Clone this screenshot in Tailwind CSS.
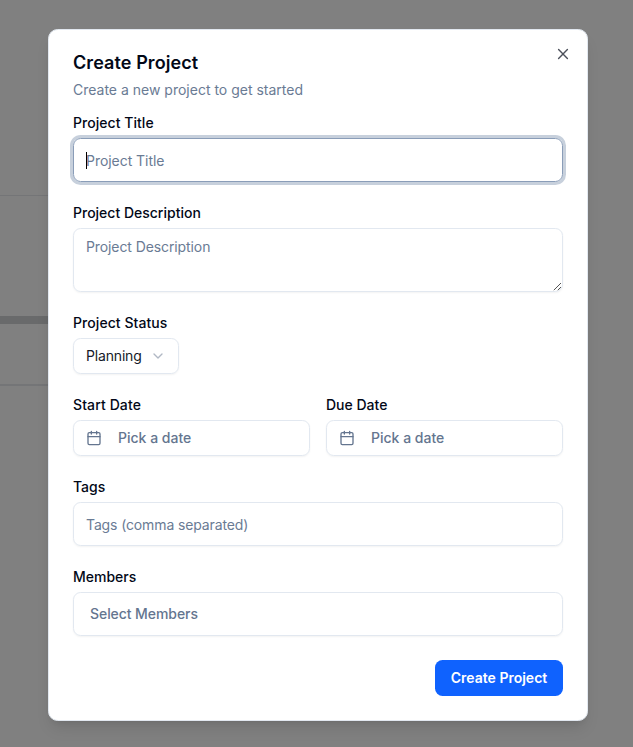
<!DOCTYPE html>
<html lang="en">
<head>
<meta charset="utf-8">
<title>Create Project</title>
<script src="https://cdn.jsdelivr.net/npm/@tailwindcss/browser@4"></script>
</head>
<body class="relative h-[747px] overflow-hidden bg-[#808080] font-['Inter',sans-serif] text-sm text-[#020817] antialiased">
  <div class="absolute top-0 left-0 w-16" aria-hidden="true">
    <div class="mt-[195px] h-px bg-[#747577]"></div>
    <div class="mt-[120px] h-2 bg-[#696a6b]"></div>
    <div class="mt-[60px] h-0.5 bg-[#747577]"></div>
  </div>

  <main role="dialog" class="relative mt-[29px] ml-12 flex h-[692px] w-[540px] flex-col rounded-[9.6px] border border-[#e2e8f0] bg-white p-6 shadow-lg">
    <button aria-label="Close" class="absolute top-4 right-4 opacity-70">
      <svg class="size-4" viewBox="0 0 16 16" fill="none" stroke="currentColor" stroke-width="1.4" stroke-linecap="round"><path d="m3.6 3.6 8.8 8.8M12.4 3.6l-8.8 8.8"/></svg>
    </button>

    <h1 class="text-lg leading-[18px] font-semibold tracking-[0.005em]">Create Project</h1>
    <p class="mt-2 leading-5 text-[#6a7b94]">Create a new project to get started</p>

    <form class="mt-4 flex flex-col gap-6">
      <div class="flex flex-col gap-2">
        <label class="leading-[14px] font-medium tracking-[0.003em]">Project Title</label>
        <div class="relative flex h-11 items-center rounded-[7.6px] border border-[#8a9db8] px-3 pt-px tracking-[-0.003em] text-[#6a7b94] ring-3 ring-[#c7d0dc]">
          <span class="absolute top-[13px] left-3 h-[17px] w-px bg-black"></span>
          <span>Project Title</span>
        </div>
      </div>

      <div class="flex flex-col gap-2">
        <label class="leading-[14px] font-medium">Project Description</label>
        <div class="relative h-16 rounded-[7.6px] border border-[#e2e8f0] px-3 py-2 leading-5 tracking-[-0.007em] text-[#6a7b94] shadow-xs">
          Project Description
          <svg class="absolute right-0 bottom-0 size-[9px]" viewBox="0 0 9 9" fill="none" stroke="#555" stroke-width="1"><path d="M.8 8.2 8 1M4.8 8.2 8 5"/></svg>
        </div>
      </div>

      <div class="flex flex-col gap-2">
        <label class="leading-[14px] font-medium tracking-[0.005em]">Project Status</label>
        <div class="flex h-9 w-[106px] items-center justify-between rounded-[7.6px] border border-[#e2e8f0] px-3 shadow-xs">
          <span class="tracking-[-0.012em] text-[#141a28]">Planning</span>
          <svg class="size-4 opacity-50" viewBox="0 0 24 24" fill="none" stroke="#64748b" stroke-width="2" stroke-linecap="round" stroke-linejoin="round"><path d="m6 9 6 6 6-6"/></svg>
        </div>
      </div>

      <div class="grid grid-cols-2 gap-4">
        <div class="flex flex-col gap-2">
          <label class="leading-[14px] font-medium tracking-[0.008em]">Start Date</label>
          <div class="flex h-9 items-center gap-4 rounded-[7.6px] border border-[#e2e8f0] px-3 font-medium text-[#64758f] shadow-xs">
            <svg class="size-4" viewBox="0 0 24 24" fill="none" stroke="currentColor" stroke-width="2" stroke-linecap="round" stroke-linejoin="round"><path d="M8 2v4M16 2v4M3 10h18"/><rect x="3" y="4" width="18" height="18" rx="2"/></svg>
            <span>Pick a date</span>
          </div>
        </div>
        <div class="flex flex-col gap-2">
          <label class="leading-[14px] font-medium">Due Date</label>
          <div class="flex h-9 items-center gap-4 rounded-[7.6px] border border-[#e2e8f0] px-3 font-medium text-[#64758f] shadow-xs">
            <svg class="size-4" viewBox="0 0 24 24" fill="none" stroke="currentColor" stroke-width="2" stroke-linecap="round" stroke-linejoin="round"><path d="M8 2v4M16 2v4M3 10h18"/><rect x="3" y="4" width="18" height="18" rx="2"/></svg>
            <span>Pick a date</span>
          </div>
        </div>
      </div>

      <div class="flex flex-col gap-2">
        <label class="leading-[14px] font-medium">Tags</label>
        <div class="flex h-11 items-center rounded-[7.6px] border border-[#e2e8f0] px-3 pt-px tracking-[-0.009em] text-[#6a7b94] shadow-xs">Tags (comma separated)</div>
      </div>

      <div class="flex flex-col gap-2">
        <label class="leading-[14px] font-medium">Members</label>
        <div class="flex h-11 items-center rounded-[7.6px] border border-[#e2e8f0] px-4 font-medium tracking-[-0.005em] text-[#64758f] shadow-xs">Select Members</div>
      </div>

      <button type="button" class="flex h-9 w-32 items-center justify-center self-end rounded-[7.6px] bg-[#0f62fe] font-semibold text-white">Create Project</button>
    </form>
  </main>
</body>
</html>
